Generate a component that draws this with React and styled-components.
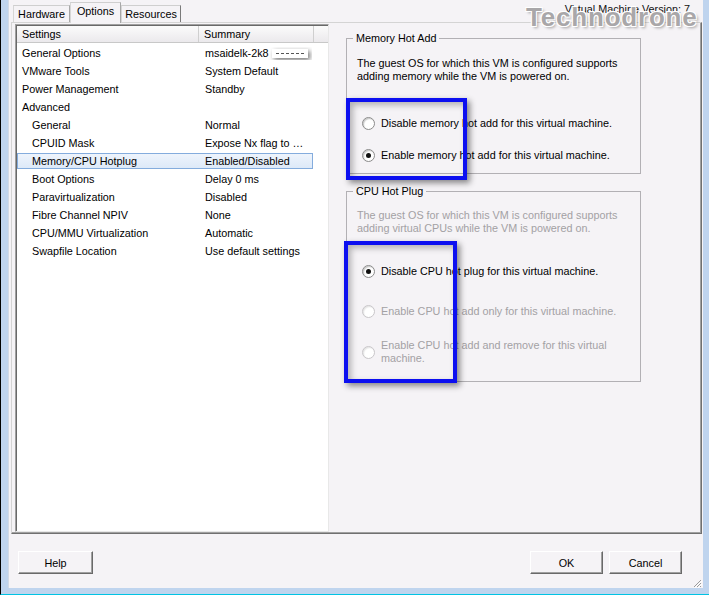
import React from 'react';
import styled, { createGlobalStyle } from 'styled-components';

const Global = createGlobalStyle`
  html, body { margin: 0; padding: 0; background: #bfd4ee; }
  body { font-family: "Liberation Sans", Arial, sans-serif; font-size: 10.8px; color: #000; }
  * { box-sizing: border-box; }
`;

const Frame = styled.div`
  width: 709px;
  height: 595px;
  display: flex;
  background: #bfd4ee;
  border-left: 1px solid #000;
  border-bottom: 1px solid #00c3e3;
  padding: 0 6px 6px 7px;
`;

const Client = styled.div`
  position: relative;
  flex: 1;
  display: flex;
  flex-direction: column;
  background: #f5f3f6;
  border-left: 1px solid #d2dae6;
  overflow: hidden;
`;

const TopRow = styled.div`
  height: 22px;
  display: flex;
  align-items: flex-end;
  justify-content: space-between;
  padding: 0 13px 0 4px;
`;

const Tabs = styled.div`
  display: flex;
  align-items: flex-end;
  position: relative;
  z-index: 2;
`;

const Tab = styled.div`
  width: ${p => p.$w}px;
  height: ${p => (p.$active ? 21 : 17)}px;
  margin-bottom: ${p => (p.$active ? -1 : 0)}px;
  display: flex;
  align-items: center;
  justify-content: center;
  padding-bottom: ${p => (p.$active ? 3 : 0)}px;
  background: #f5f3f6;
  border-top: 1px solid #cfcfcf;
  border-left: 1px solid #d6d6d6;
  border-right: 1px solid ${p => (p.$last ? '#7a7a7a' : '#a8a8a8')};
  line-height: 13px;
  white-space: nowrap;
`;

const Version = styled.div`
  align-self: flex-start;
  margin-top: 3px;
  line-height: 13px;
  color: #111;
`;

const Watermark = styled.div`
  position: absolute;
  left: 517px;
  top: 4px;
  font-family: "Liberation Sans", Arial, sans-serif;
  font-weight: bold;
  font-size: 26px;
  line-height: 26px;
  letter-spacing: 0.8px;
  color: #a9a7a9;
  text-shadow: -1px -1px 0 #fff, 1px -1px 0 #fff, -1px 1px 0 #fff, 1px 1px 0 #fff,
    2px 2px 3px rgba(0, 0, 0, 0.35);
  pointer-events: none;
  z-index: 5;
`;

const TabPanel = styled.div`
  height: 512px;
  margin: 0 1px 0 2px;
  display: flex;
  padding: 1px 0 0 3px;
  border-top: 1px solid #d4d4d4;
  border-left: 1px solid #d4d4d4;
  border-right: 1px solid #707070;
  border-bottom: 1px solid #707070;
  box-shadow: inset -1px -1px 0 #a0a0a0;
`;

const List = styled.div`
  width: 314px;
  height: 508px;
  background: #fff;
  border-top: 1px solid #a0a0a0;
  border-left: 1px solid #a0a0a0;
  border-right: 1px solid #e8e8e8;
  border-bottom: 1px solid #e8e8e8;
  box-shadow: inset 1px 1px 0 #696969;
  padding: 1px 0 0 1px;
`;

const Header = styled.div`
  height: 17px;
  display: flex;
  background: linear-gradient(#fbfbfb, #ebe9ec);
  border-bottom: 1px solid #c8c8c8;
  margin-bottom: 1px;
`;

const HeaderCell = styled.div`
  width: ${p => (p.$w ? `${p.$w}px` : 'auto')};
  flex: ${p => (p.$w ? 'none' : 1)};
  display: flex;
  align-items: center;
  padding-left: 5px;
  border-right: ${p => (p.$w ? '1px solid #cfcfcf' : 'none')};
  line-height: 13px;
`;

const Row = styled.div`
  height: 18px;
  padding: 1px 0 1px 0;
`;

const RowBox = styled.div`
  width: 296px;
  height: 16px;
  display: flex;
  align-items: center;
  border: 1px solid ${p => (p.$sel ? '#84acdd' : 'transparent')};
  background: ${p => (p.$sel ? 'linear-gradient(#eef4fc, #dde9f8)' : 'transparent')};
  line-height: 13px;
  white-space: nowrap;
`;

const NameCell = styled.div`
  width: 181px;
  padding-left: ${p => (p.$depth ? 14 : 4)}px;
`;

const SumCell = styled.div`
  flex: 1;
  padding-left: 6px;
  display: flex;
  align-items: center;
  overflow: hidden;
`;

const Redact = styled.span`
  display: inline-flex;
  align-items: center;
  justify-content: center;
  width: 36px;
  height: 9px;
  margin-left: 3px;
  background: #fff;
  box-shadow: 2px 2px 5px rgba(0, 0, 0, 0.55);
  &::after {
    content: '';
    width: 28px;
    border-top: 1px dashed #555;
  }
`;

const RightPane = styled.div`
  position: relative;
  flex: 1;
  padding: 8px 0 0 17px;
`;

const Group = styled.fieldset`
  width: 295px;
  margin: ${p => p.$mt || 0}px 0 0 0;
  padding: 0 0 ${p => p.$pb}px 10px;
  border: 1px solid #b2b0b4;
  min-width: 0;
`;

const Legend = styled.legend`
  margin-left: -4px;
  padding: 0 3px;
  line-height: 13px;
  color: #000;
`;

const Desc = styled.div`
  margin-top: ${p => p.$mt}px;
  line-height: 13px;
  color: ${p => (p.$disabled ? '#a3a1a4' : '#000')};
`;

const RadioRow = styled.div`
  margin-top: ${p => p.$mt}px;
  margin-left: 5px;
  display: flex;
  align-items: center;
  min-height: 16px;
  line-height: 13px;
  color: ${p => (p.$disabled ? '#a3a1a4' : '#000')};
`;

const Circle = styled.span`
  flex: none;
  width: 13px;
  height: 13px;
  margin-right: 6px;
  border-radius: 50%;
  border: 1px solid ${p => (p.$disabled ? '#c9c7ca' : '#8c8c8c')};
  background: radial-gradient(circle at 60% 60%, #ffffff 45%, #e4e4e4 100%);
  box-shadow: inset 1px 1px 1px rgba(0, 0, 0, ${p => (p.$disabled ? 0.06 : 0.18)});
  display: flex;
  align-items: center;
  justify-content: center;
  &::after {
    content: '';
    width: 5px;
    height: 5px;
    border-radius: 50%;
    background: ${p => (p.$checked ? '#111' : 'transparent')};
  }
`;

const Highlight = styled.div`
  position: absolute;
  left: ${p => p.$x}px;
  top: ${p => p.$y}px;
  width: ${p => p.$w}px;
  height: ${p => p.$h}px;
  border: 4px solid #0c0ff0;
  box-shadow: 3px 3px 6px rgba(0, 0, 0, 0.45), inset 3px 3px 6px rgba(0, 0, 0, 0.28);
  pointer-events: none;
`;

const ButtonRow = styled.div`
  display: flex;
  margin-top: 17px;
  padding: 0 21px 0 9px;
  gap: 6px;
`;

const Spacer = styled.div`
  flex: 1;
`;

const Button = styled.button`
  width: ${p => p.$w}px;
  height: 23px;
  padding: 0;
  background: #f5f3f6;
  border-top: 1px solid #ffffff;
  border-left: 1px solid #ffffff;
  border-right: 1px solid #696969;
  border-bottom: 1px solid #696969;
  box-shadow: inset -1px -1px 0 #a0a0a0;
  font-family: "Liberation Sans", Arial, sans-serif;
  font-size: 10.8px;
  color: #000;
`;

const Grip = styled.svg`
  position: absolute;
  right: 1px;
  bottom: 0;
`;

const rows = [
  { name: 'General Options', sum: 'msaidelk-2k8', redact: true },
  { name: 'VMware Tools', sum: 'System Default' },
  { name: 'Power Management', sum: 'Standby' },
  { name: 'Advanced', sum: '' },
  { name: 'General', sum: 'Normal', depth: 1 },
  { name: 'CPUID Mask', sum: 'Expose Nx flag to …', depth: 1 },
  { name: 'Memory/CPU Hotplug', sum: 'Enabled/Disabled', depth: 1, sel: true },
  { name: 'Boot Options', sum: 'Delay 0 ms', depth: 1 },
  { name: 'Paravirtualization', sum: 'Disabled', depth: 1 },
  { name: 'Fibre Channel NPIV', sum: 'None', depth: 1 },
  { name: 'CPU/MMU Virtualization', sum: 'Automatic', depth: 1 },
  { name: 'Swapfile Location', sum: 'Use default settings', depth: 1 },
];

function Radio({ checked, disabled, mt, children }) {
  return (
    <RadioRow $mt={mt} $disabled={disabled}>
      <Circle $checked={checked} $disabled={disabled} />
      <span>{children}</span>
    </RadioRow>
  );
}

export default function App() {
  return (
    <>
      <Global />
      <Frame>
        <Client>
          <TopRow>
            <Tabs>
              <Tab $w={57}>Hardware</Tab>
              <Tab $w={51} $active>Options</Tab>
              <Tab $w={60} $last>Resources</Tab>
            </Tabs>
            <Version>Virtual Machine Version: 7</Version>
          </TopRow>
          <Watermark>Technodrone</Watermark>
          <TabPanel>
            <List>
              <Header>
                <HeaderCell $w={182}>Settings</HeaderCell>
                <HeaderCell $w={115}>Summary</HeaderCell>
                <HeaderCell />
              </Header>
              {rows.map(r => (
                <Row key={r.name}>
                  <RowBox $sel={r.sel}>
                    <NameCell $depth={r.depth}>{r.name}</NameCell>
                    <SumCell>
                      {r.sum}
                      {r.redact && <Redact />}
                    </SumCell>
                  </RowBox>
                </Row>
              ))}
            </List>
            <RightPane>
              <Group $pb={10}>
                <Legend>Memory Hot Add</Legend>
                <Desc $mt={12}>
                  The guest OS for which this VM is configured supports
                  <br />
                  adding memory while the VM is powered on.
                </Desc>
                <Radio mt={32}>Disable memory hot add for this virtual machine.</Radio>
                <Radio mt={16} checked>
                  Enable memory hot add for this virtual machine.
                </Radio>
              </Group>
              <Group $mt={11} $pb={16}>
                <Legend>CPU Hot Plug</Legend>
                <Desc $mt={11} $disabled>
                  The guest OS for which this VM is configured supports
                  <br />
                  adding virtual CPUs while the VM is powered on.
                </Desc>
                <Radio mt={28} checked>
                  Disable CPU hot plug for this virtual machine.
                </Radio>
                <Radio mt={24} disabled>
                  Enable CPU hot add only for this virtual machine.
                </Radio>
                <Radio mt={20} disabled>
                  Enable CPU hot add and remove for this virtual
                  <br />
                  machine.
                </Radio>
              </Group>
              <Highlight $x={17} $y={74} $w={121} $h={82} />
              <Highlight $x={15} $y={217} $w={113} $h={142} />
            </RightPane>
          </TabPanel>
          <ButtonRow>
            <Button $w={75}>Help</Button>
            <Spacer />
            <Button $w={73}>OK</Button>
            <Button $w={73}>Cancel</Button>
          </ButtonRow>
          <Grip width="10" height="10" viewBox="0 0 10 10">
            <path d="M9 2 L2 9 M9 5 L5 9 M9 8 L8 9" stroke="#9a9a9a" strokeWidth="1" />
            <path d="M10 3 L3 10 M10 6 L6 10" stroke="#ffffff" strokeWidth="1" />
          </Grip>
        </Client>
      </Frame>
    </>
  );
}
